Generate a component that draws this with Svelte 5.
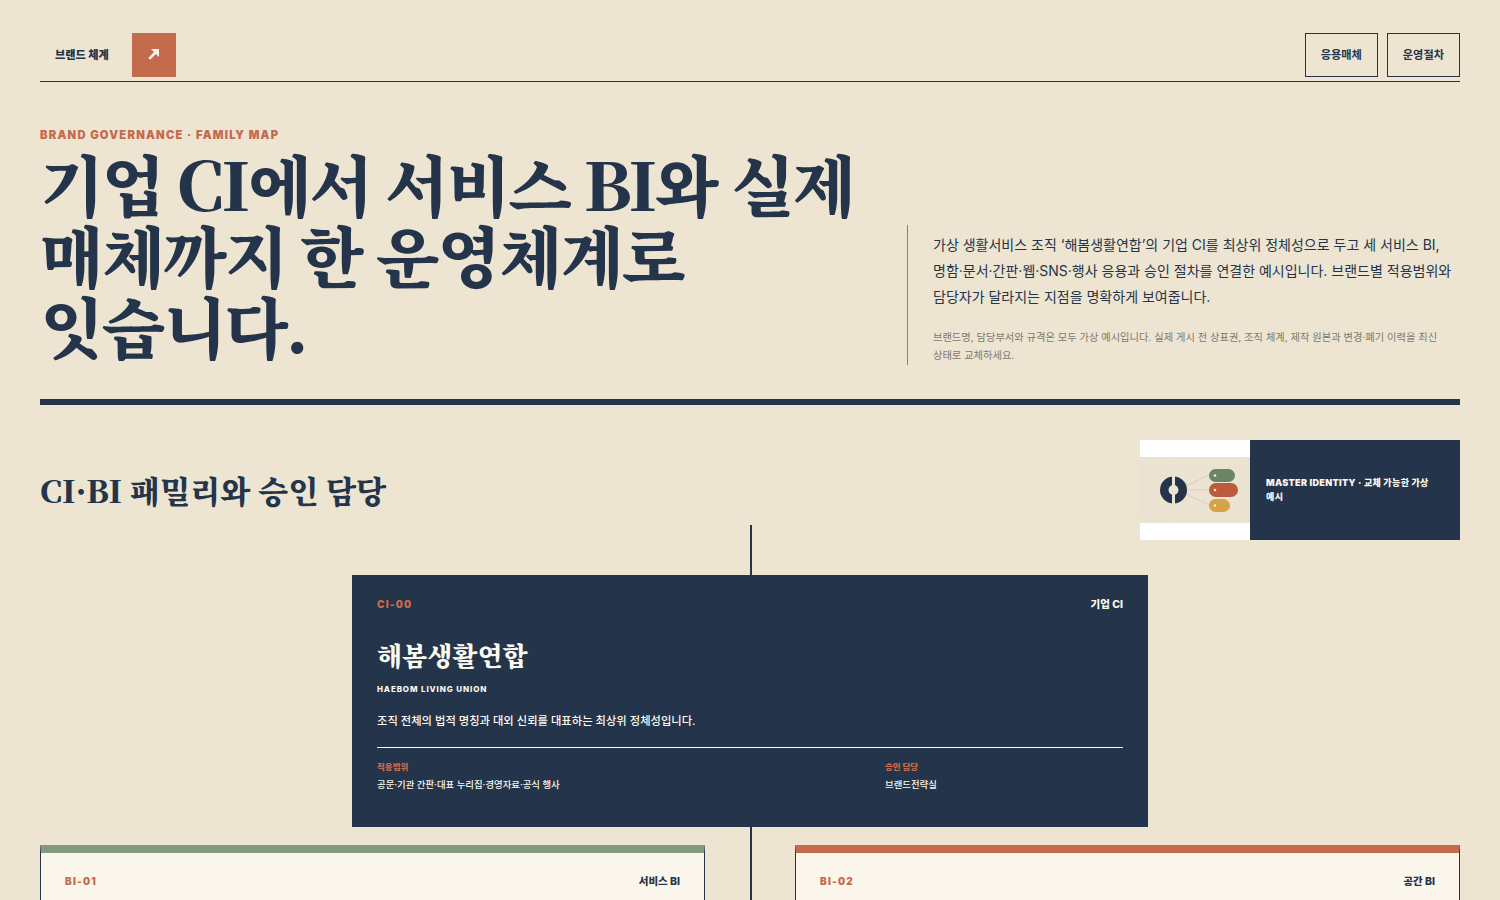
<script lang="ts">
  const kids = [
    { code: "BI-01", kind: "서비스 BI", accent: "#84997f" },
    { code: "BI-02", kind: "공간 BI", accent: "#c46b4e" },
  ];
</script>

<div class="page">
  <header class="topbar">
    <div class="brand">
      <span class="brand-name">브랜드 체계</span>
      <span class="brand-mark">
        <svg width="12" height="12" viewBox="0 0 12 12" aria-hidden="true">
          <path d="M1.2 10.8 7.5 4.5" fill="none" stroke="#faf6ec" stroke-width="2.6" />
          <path d="M3 1h8v8z" fill="#faf6ec" />
        </svg>
      </span>
    </div>
    <nav class="nav">
      <span class="nav-btn">응용매체</span>
      <span class="nav-btn">운영절차</span>
    </nav>
  </header>

  <section class="hero">
    <div class="hero-main">
      <p class="eyebrow">BRAND GOVERNANCE · FAMILY MAP</p>
      <h1>기업 CI에서 서비스 BI와 실제 매체까지 한 운영체계로 잇습니다.</h1>
    </div>
    <div class="hero-side">
      <p class="lead">가상 생활서비스 조직 ‘해봄생활연합’의 기업 CI를 최상위 정체성으로 두고 세 서비스 BI, 명함·문서·간판·웹·SNS·행사 응용과 승인 절차를 연결한 예시입니다. 브랜드별 적용범위와 담당자가 달라지는 지점을 명확하게 보여줍니다.</p>
      <p class="note">브랜드명, 담당부서와 규격은 모두 가상 예시입니다. 실제 게시 전 상표권, 조직 체계, 제작 원본과 변경·폐기 이력을 최신 상태로 교체하세요.</p>
    </div>
  </section>

  <section class="family">
    <div class="family-head">
      <h2>CI·BI 패밀리와 승인 담당</h2>
      <figure class="master">
        <div class="master-pic">
          <svg width="110" height="66" viewBox="0 0 110 66" aria-hidden="true">
            <defs>
              <pattern id="grid" width="9" height="9" patternUnits="userSpaceOnUse">
                <path d="M9 0H0V9" fill="none" stroke="#e3dac8" stroke-width=".6" />
              </pattern>
            </defs>
            <rect width="110" height="66" fill="#ece4d3" />
            <rect width="110" height="66" fill="url(#grid)" />
            <path d="M46 29 69 18M46 33h24M46 37l23 11" stroke="#d8cfbc" stroke-width="1" fill="none" />
            <circle cx="33.5" cy="33" r="13.5" fill="#24344a" />
            <circle cx="33.5" cy="33" r="5" fill="#ece4d3" />
            <rect x="32" y="18" width="3" height="30" fill="#ece4d3" />
            <rect x="69" y="12" width="26" height="13" rx="6.5" fill="#6b8463" />
            <rect x="69" y="26" width="29" height="14" rx="7" fill="#bb5a3c" />
            <rect x="69" y="42" width="21" height="13" rx="6.5" fill="#d3a445" />
            <circle cx="75" cy="18.5" r="1.3" fill="#f6f0df" />
            <circle cx="75" cy="33" r="1.3" fill="#f6f0df" />
            <circle cx="75" cy="48.5" r="1.3" fill="#f6f0df" />
          </svg>
        </div>
        <figcaption>MASTER IDENTITY · 교체 가능한 가상 예시</figcaption>
      </figure>
    </div>

    <div class="tree">
      <div class="ci-card">
        <div class="card-top">
          <span class="code">CI-00</span>
          <span class="kind">기업 CI</span>
        </div>
        <h3>해봄생활연합</h3>
        <p class="en">HAEBOM LIVING UNION</p>
        <p class="desc">조직 전체의 법적 명칭과 대외 신뢰를 대표하는 최상위 정체성입니다.</p>
        <dl class="meta">
          <div>
            <dt>적용범위</dt>
            <dd>공문·기관 간판·대표 누리집·경영자료·공식 행사</dd>
          </div>
          <div>
            <dt>승인 담당</dt>
            <dd>브랜드전략실</dd>
          </div>
        </dl>
      </div>
      <div class="bi-row">
        {#each kids as k}
          <div class="bi-card" style="border-top-color: {k.accent}">
            <div class="card-top">
              <span class="code">{k.code}</span>
              <span class="kind">{k.kind}</span>
            </div>
          </div>
        {/each}
      </div>
    </div>
  </section>
</div>

<style>
  :global(body) {
    margin: 0;
    background: #ede4d1;
    overflow: hidden;
  }

  .page {
    height: 900px;
    overflow: hidden;
    box-sizing: border-box;
    padding: 0 40px;
    color: #24344a;
    font-family: Inter, "Noto Sans CJK KR", sans-serif;
    word-break: keep-all;
  }

  .topbar {
    display: flex;
    justify-content: space-between;
    align-items: center;
    height: 82px;
    box-sizing: border-box;
    padding-top: 33px;
    padding-bottom: 4px;
    border-bottom: 1px solid #24344a;
  }

  .brand {
    display: flex;
    align-items: center;
    gap: 23px;
    padding-left: 15px;
  }

  .brand-name {
    font-size: 11.2px;
    font-weight: 800;
    padding-bottom: 2px;
  }

  .brand-mark {
    width: 44px;
    height: 44px;
    background: #c46b4e;
    display: flex;
    align-items: center;
    justify-content: center;
    padding-bottom: 3px;
    box-sizing: border-box;
  }

  .nav {
    display: flex;
    gap: 9px;
  }

  .nav-btn {
    height: 44px;
    box-sizing: border-box;
    border: 1px solid #24344a;
    padding: 0 15px 2px;
    display: flex;
    align-items: center;
    font-size: 11.2px;
    font-weight: 700;
  }

  .hero {
    display: grid;
    grid-template-columns: 1fr 553px;
    gap: 36px;
    align-items: end;
    padding: 46px 0 34px;
    border-bottom: 6px solid #24344a;
  }

  .eyebrow {
    margin: 0 0 5px;
    font-size: 11.2px;
    line-height: 14px;
    font-weight: 900;
    letter-spacing: 0.11em;
    color: #c46b4e;
  }

  h1 {
    margin: 0 0 5px;
    font-family: "Noto Serif CJK KR", serif;
    font-size: 66px;
    line-height: 71px;
    font-weight: 900;
    letter-spacing: -0.034em;
  }

  .hero-side {
    border-left: 1px solid #c46b4e;
    padding: 7px 0 1px 25px;
  }

  .lead {
    margin: 0;
    font-size: 14px;
    line-height: 26px;
  }

  .note {
    margin: 18px 0 0;
    font-size: 10.25px;
    line-height: 18px;
    color: #7d7a70;
  }

  .family-head {
    display: flex;
    justify-content: space-between;
    align-items: center;
    padding-top: 35px;
  }

  h2 {
    margin: 0 0 2px;
    font-family: "Noto Serif CJK KR", serif;
    font-size: 31.2px;
    font-weight: 900;
  }

  .master {
    margin: 0;
    width: 320px;
    height: 100px;
    display: flex;
  }

  .master-pic {
    width: 110px;
    background: #fff;
    display: flex;
    align-items: center;
  }

  .master-pic svg {
    display: block;
  }

  figcaption {
    flex: 1;
    background: #24344a;
    color: #faf6ec;
    padding: 0 16px;
    display: flex;
    align-items: center;
    font-size: 9px;
    line-height: 14px;
    font-weight: 900;
    letter-spacing: 0.04em;
  }

  .tree {
    position: relative;
    padding-top: 35px;
    display: flex;
    flex-direction: column;
    align-items: center;
  }

  .tree::before {
    content: "";
    position: absolute;
    left: 50%;
    top: -15px;
    bottom: 0;
    width: 2px;
    background: #24344a;
  }

  .ci-card {
    position: relative;
    width: 796px;
    height: 252px;
    box-sizing: border-box;
    padding: 21px 25px;
    background: #24344a;
    color: #fbf8ef;
  }

  .card-top {
    display: flex;
    justify-content: space-between;
    align-items: center;
  }

  .code {
    font-size: 10px;
    font-weight: 900;
    letter-spacing: 0.12em;
    color: #c46b4e;
  }

  .kind {
    font-size: 10.5px;
    font-weight: 800;
  }

  h3 {
    margin: 26px 0 0;
    font-family: "Noto Serif CJK KR", serif;
    font-size: 26px;
    line-height: 36px;
    font-weight: 900;
  }

  .en {
    margin: 11px 0 0;
    font-size: 8px;
    font-weight: 800;
    letter-spacing: 0.11em;
  }

  .desc {
    margin: 18px 0 0;
    font-size: 11.3px;
    line-height: 18px;
    font-weight: 500;
  }

  .meta {
    margin: 17px 0 0;
    padding-top: 13px;
    border-top: 1px solid #fbf8ef;
    display: grid;
    grid-template-columns: 1fr 238px;
    gap: 16px;
  }

  dt {
    font-size: 8.5px;
    font-weight: 800;
    color: #c46b4e;
    line-height: 12px;
  }

  dd {
    margin: 4px 0 0;
    font-size: 9.4px;
    line-height: 16px;
    font-weight: 500;
  }

  .bi-row {
    position: relative;
    width: 100%;
    margin-top: 18px;
    display: grid;
    grid-template-columns: 665px 665px;
    justify-content: space-between;
  }

  .bi-card {
    height: 200px;
    box-sizing: border-box;
    padding: 20px 24px;
    background: #faf6ec;
    border: 1px solid #24344a;
    border-top: 8px solid;
  }

  .bi-card .kind {
    color: #24344a;
  }
</style>
